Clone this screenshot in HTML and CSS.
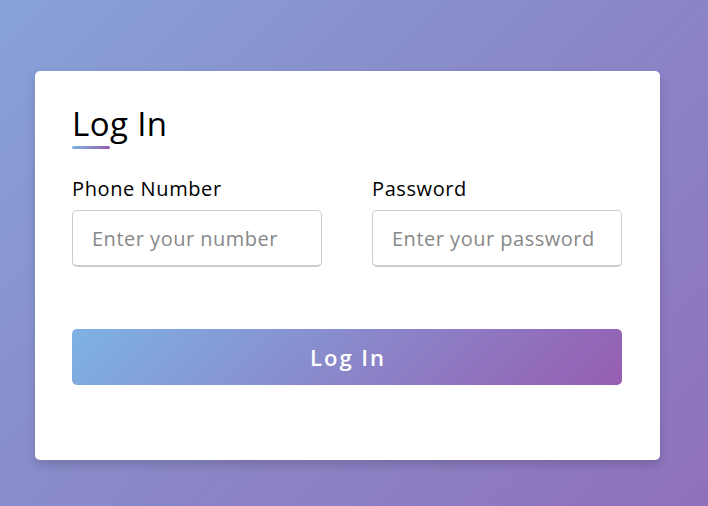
FILE: index.html
```html
<!DOCTYPE html>
<html lang="en">
<head>
<meta charset="utf-8">
<title>Log In</title>
<link rel="stylesheet" href="styles.css">
</head>
<body>
  <main class="card">
    <div class="title">
      <h1 class="title-text">Log In</h1>
      <span class="title-bar"></span>
    </div>
    <form class="form">
      <div class="fields">
        <label class="field">
          <span class="field-label">Phone Number</span>
          <input class="field-input" type="text" placeholder="Enter your number">
        </label>
        <label class="field">
          <span class="field-label">Password</span>
          <input class="field-input" type="password" placeholder="Enter your password">
        </label>
      </div>
      <button class="submit" type="button">Log In</button>
    </form>
  </main>
</body>
</html>
```

FILE: styles.css
```css
* { box-sizing: border-box; }

html, body { height: 100%; }

body {
  margin: 0;
  padding: 71px 48px 0 35px;
  font-family: "Open Sans", "Noto Sans", sans-serif;
  background: linear-gradient(135deg, #87a2d8 0%, #8a88c8 50%, #8f71bb 100%);
  display: flex;
  align-items: flex-start;
}

.card {
  width: 625px;
  background: #fff;
  border-radius: 5px;
  padding: 33px 38px 75px 37px;
  box-shadow: 0 5px 10px rgba(0, 0, 0, 0.15);
}

.title {
  display: flex;
  flex-direction: column;
  align-items: flex-start;
}

.title-text {
  margin: 0;
  font-size: 33px;
  font-weight: 400;
  letter-spacing: 0.4px;
  line-height: 40px;
  color: #000;
}

.title-bar {
  display: block;
  width: 38px;
  height: 3px;
  border-radius: 2px;
  margin-top: 2px;
  background: linear-gradient(90deg, #7eb3e3, #965db1);
}

.form {
  display: flex;
  flex-direction: column;
}

.fields {
  margin-top: 27px;
  display: grid;
  grid-template-columns: 250px 250px;
  column-gap: 50px;
}

.field {
  display: flex;
  flex-direction: column;
}

.field-label {
  font-size: 20px;
  font-weight: 500;
  letter-spacing: 0.6px;
  line-height: 26px;
  color: #000;
}

.field-input {
  margin-top: 8px;
  height: 57px;
  padding: 0 19px;
  border: 1px solid #ccc;
  border-bottom-width: 2px;
  border-radius: 5px;
  font-family: inherit;
  font-size: 20px;
  letter-spacing: 0.5px;
  color: #333;
  background: #fff;
  outline: none;
}

.field-input::placeholder {
  color: #888;
}

.submit {
  margin-top: 62px;
  height: 56px;
  width: 550px;
  border: none;
  border-radius: 5px;
  background: linear-gradient(135deg, #7eb3e3, #965db1);
  color: #fff;
  font-family: inherit;
  font-size: 22px;
  font-weight: 600;
  letter-spacing: 2px;
  padding: 0 0 0 2px;
  cursor: pointer;
}
```
